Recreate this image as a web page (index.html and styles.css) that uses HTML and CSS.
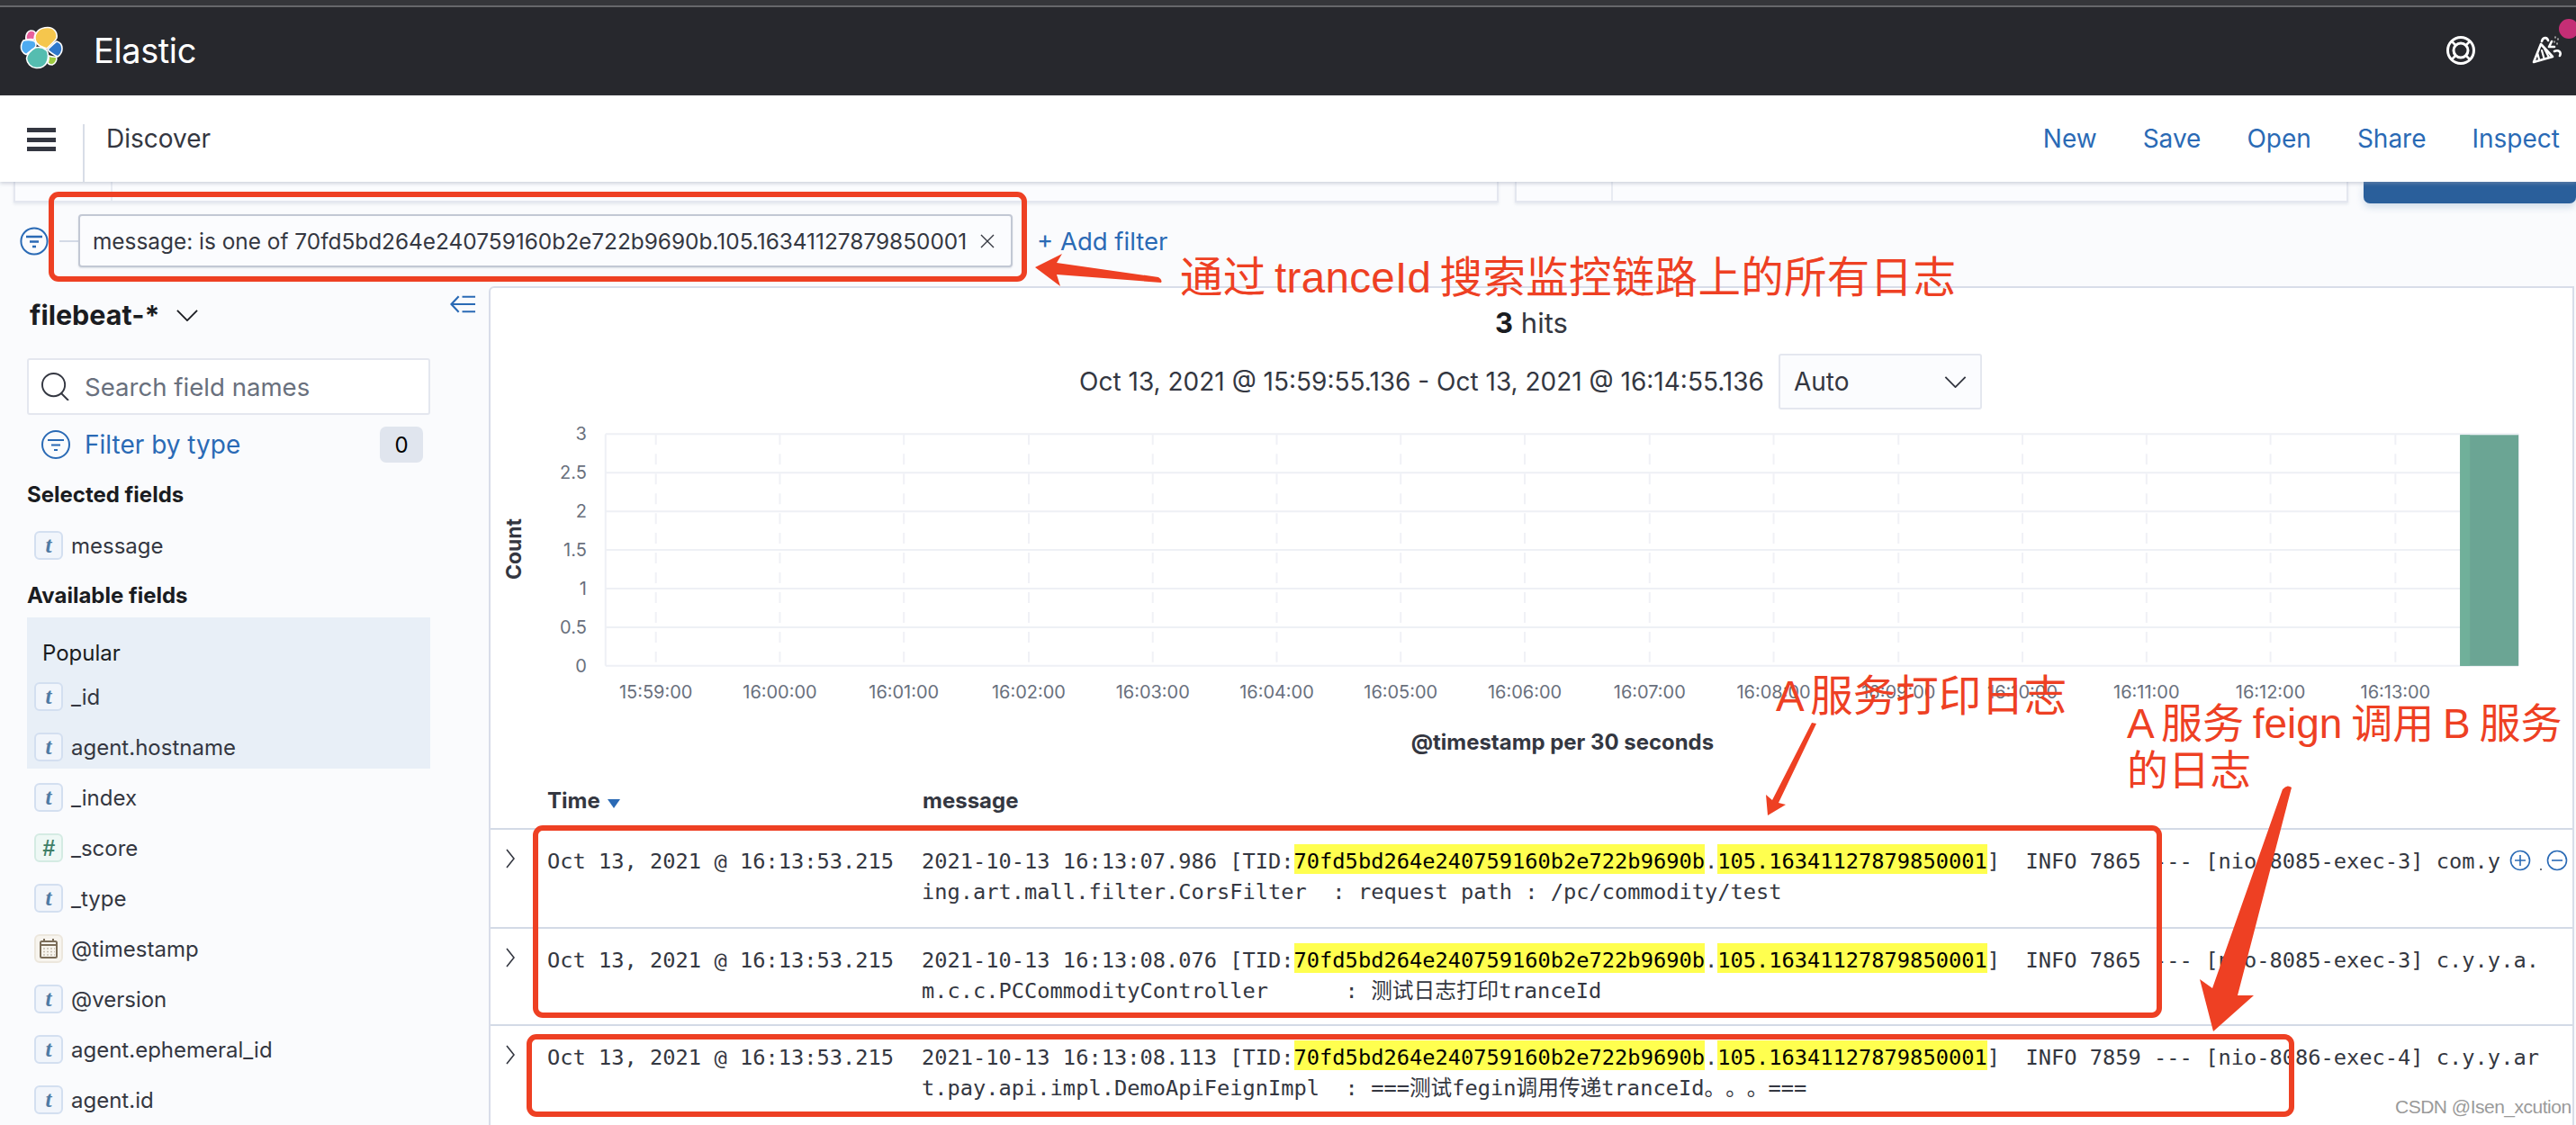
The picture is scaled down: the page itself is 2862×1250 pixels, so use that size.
FILE: index.html
```html
<!DOCTYPE html>
<html lang="en">
<head>
<meta charset="utf-8">
<title>Discover - Elastic</title>
<link rel="stylesheet" href="styles.css">
</head>
<body>
<div class="page">
  <div class="topline"></div>
  <header class="header">
    <div class="brand">
      <svg class="logo" viewBox="0 0 80 65">
        <g stroke="#fff" stroke-width="1.6" stroke-linejoin="round">
          <path fill="#e8609c" d="M19 22C18 15 22 11.5 25 12C27 12 29 13.5 29.5 15C28.5 17 28 20 28 22C25 21 22 21.5 19 22Z"/>
          <path fill="#f5c64d" d="M29 22C28 13 35 8.5 43 8.5C50 8.5 54 14 53 20C52 23 49 25 42 32C36 30 30 28 29 22Z"/>
          <path fill="#4dabf0" d="M16 23C19 22 25 22 29 24C30 27 31 29 28 32C24 34 21 37 19 38.5C15 37 13 33 13.5 29C14 26 15 24 16 23Z"/>
          <path fill="#2f78cc" d="M43 33C47 29 51 25 53 24C57 25 59 28 59 32C59 36 57 39 54 41C50 39 46 37 43 33Z"/>
          <path fill="#55bdb0" d="M29 31C33 30 38 31 42 34C44 38 43.5 43 42.5 46C41 51 36 54 30 53.5C24 53 20 48 19.5 43C20 38 24 34 29 31Z"/>
          <path fill="#9dc93f" d="M44 40C47 41 50 41.5 52.5 41C53.5 44 52 49 48 50C46 50 44 49.5 43 48C44 46 44.5 43 44 40Z"/>
        </g>
      </svg>
      <span class="brand-name">Elastic</span>
    </div>
    <div class="header-icons">
      <svg class="icon-help" viewBox="0 0 34 34" fill="none" stroke="#fff" stroke-width="3">
        <circle cx="17" cy="17" r="14.5"/>
        <circle cx="17" cy="17" r="8"/>
        <path stroke-width="2.5" d="M11 11L7 7M23 11L27 7M11 23L7 27M23 23L27 27"/>
      </svg>
      <svg class="icon-news" viewBox="0 0 34 32" fill="none" stroke="#fff" stroke-width="2.6" stroke-linecap="round" stroke-linejoin="round">
        <path d="M10 9L2 29L23 23Z"/>
        <path d="M8 26L6.5 20M13.5 25L11 16M19 24L14 14" stroke-width="2.2"/>
        <path d="M11 6C12 1 17 1 18 5M22 6L19 12L25 12M25 17C30 15 33 18 31 22"/>
        <path d="M26 1V2M29 3V4M25 6V7M28 8V9" stroke-width="1.6" stroke="#bbb"/>
      </svg>
      <span class="news-dot"></span>
    </div>
  </header>
  <nav class="subnav">
    <div class="menu-btn"><span></span><span></span><span></span></div>
    <div class="crumb">Discover</div>
    <div class="actions">
      <a class="action">New</a>
      <a class="action">Save</a>
      <a class="action">Open</a>
      <a class="action">Share</a>
      <a class="action">Inspect</a>
    </div>
  </nav>
  <div class="querybar">
    <div class="qbox qbox-main"><span class="qcell-prefix"></span></div>
    <div class="qbox qbox-time"><span class="qcell-prefix"></span></div>
    <div class="qbutton"></div>
  </div>
  <div class="filterbar">
    <svg class="icon-filter-main" viewBox="0 0 32 32" fill="none" stroke="#2a6ab5" stroke-width="2">
      <circle cx="16" cy="16" r="14.6"/>
      <path d="M7 11H25M11 16.5H21M14 22H18" stroke-width="2.4"/>
    </svg>
    <span class="filter-dash"></span>
    <div class="chip">
      <span class="chip-text">message: is one of 70fd5bd264e240759160b2e722b9690b.105.16341127879850001</span>
      <svg class="chip-x" viewBox="0 0 16 16" fill="none" stroke="#343741" stroke-width="1.4"><path d="M1 1L15 15M15 1L1 15"/></svg>
    </div>
    <a class="add-filter">+ Add filter</a>
  </div>
  <div class="content">
    <aside class="sidebar">
      <div class="index-row">
        <span class="index-name">filebeat-*</span>
        <svg class="index-caret" viewBox="0 0 26 14" fill="none" stroke="#1a1c21" stroke-width="2"><path d="M1 1L13 13L25 1"/></svg>
        <svg class="collapse" viewBox="0 0 30 20" fill="none" stroke="#2a6ab5" stroke-width="2.2"><path d="M10 1L1.5 10L10 19M2 10H29M14 1.5H29M14 18.5H29"/></svg>
      </div>
      <div class="search">
        <svg class="search-icon" viewBox="0 0 32 32" fill="none" stroke="#343741" stroke-width="2"><circle cx="14" cy="14" r="13"/><path d="M23 24L31 32"/></svg>
        <span class="search-text">Search field names</span>
      </div>
      <div class="type-filter">
        <svg class="type-icon" viewBox="0 0 32 32" fill="none" stroke="#2a6ab5" stroke-width="2"><circle cx="16" cy="16" r="15"/><path d="M7 11H25M11 16.5H21M14 22H18" stroke-width="2.2"/></svg>
        <span class="type-label">Filter by type</span>
        <span class="type-badge">0</span>
      </div>
      <h3 class="group-title selected-title">Selected fields</h3>
      <div class="field"><span class="token token-t">t</span><span class="field-name">message</span></div>
      <h3 class="group-title available-title">Available fields</h3>
      <div class="popular">
        <div class="popular-title">Popular</div>
        <div class="field"><span class="token token-t">t</span><span class="field-name">_id</span></div>
        <div class="field"><span class="token token-t">t</span><span class="field-name">agent.hostname</span></div>
      </div>
      <div class="field"><span class="token token-t">t</span><span class="field-name">_index</span></div>
      <div class="field"><span class="token token-n">#</span><span class="field-name">_score</span></div>
      <div class="field"><span class="token token-t">t</span><span class="field-name">_type</span></div>
      <div class="field"><span class="token token-d"><svg class="cal" viewBox="0 0 20 22" fill="none" stroke="#7a6c58" stroke-width="2"><rect x="1" y="3" width="18" height="18" rx="1.5"/><path d="M1 7H19M5 0V3M15 0V3"/><path stroke="#c5bcae" stroke-width="1.6" stroke-dasharray="2 2" d="M4 11H17M4 14.5H17M4 18H17"/></svg></span><span class="field-name">@timestamp</span></div>
      <div class="field"><span class="token token-t">t</span><span class="field-name">@version</span></div>
      <div class="field"><span class="token token-t">t</span><span class="field-name">agent.ephemeral_id</span></div>
      <div class="field"><span class="token token-t">t</span><span class="field-name">agent.id</span></div>
    </aside>
    <main class="panel">
      <div class="hits"><b>3</b> hits</div>
      <div class="range">
        <span class="range-text">Oct 13, 2021 @ 15:59:55.136 - Oct 13, 2021 @ 16:14:55.136</span>
        <div class="interval">
          <span>Auto</span>
          <svg class="interval-caret" viewBox="0 0 26 14" fill="none" stroke="#343741" stroke-width="2"><path d="M1 1L13 13L25 1"/></svg>
        </div>
      </div>
      <svg class="chart" viewBox="543 465 2317 380">
        <g class="grid-h">
          <path d="M672 482H2801M672 525H2801M672 568H2801M672 611H2801M672 654H2801M672 697H2801M672 740H2801M672 482V740M2801 482V740"/>
        </g>
        <g class="grid-v">
          <path d="M728 482V740M866 482V740M1004 482V740M1143 482V740M1281 482V740M1419 482V740M1557 482V740M1695 482V740M1834 482V740M1972 482V740M2111 482V740M2249 482V740M2387 482V740M2525 482V740M2664 482V740"/>
        </g>
        <rect class="bar" x="2736" y="483" width="65" height="257"/>
        <rect class="bar-edge" x="2736" y="483" width="11" height="257"/>
        <g class="ytick">
          <text x="651" y="489">3</text>
          <text x="651" y="532">2.5</text>
          <text x="651" y="575">2</text>
          <text x="651" y="618">1.5</text>
          <text x="651" y="661">1</text>
          <text x="651" y="704">0.5</text>
          <text x="651" y="747">0</text>
        </g>
        <g class="xtick">
          <text x="728" y="776">15:59:00</text>
          <text x="866" y="776">16:00:00</text>
          <text x="1004" y="776">16:01:00</text>
          <text x="1143" y="776">16:02:00</text>
          <text x="1281" y="776">16:03:00</text>
          <text x="1419" y="776">16:04:00</text>
          <text x="1557" y="776">16:05:00</text>
          <text x="1695" y="776">16:06:00</text>
          <text x="1834" y="776">16:07:00</text>
          <text x="1972" y="776">16:08:00</text>
          <text x="2111" y="776">16:09:00</text>
          <text x="2249" y="776">16:10:00</text>
          <text x="2387" y="776">16:11:00</text>
          <text x="2525" y="776">16:12:00</text>
          <text x="2664" y="776">16:13:00</text>
        </g>
        <text class="axis-title" transform="translate(578 610) rotate(-90)">Count</text>
        <text class="axis-title axis-title-x" x="1737" y="833">@timestamp per 30 seconds</text>
      </svg>
      <div class="table-head">
        <span class="col-time">Time<svg class="sort" viewBox="0 0 14 10"><path fill="#2a6ab5" d="M0 0H14L7 10Z"/></svg></span>
        <span class="col-msg">message</span>
      </div>
      <div class="row row-first">
        <svg class="row-toggle" viewBox="0 0 10 22" fill="none" stroke="#343741" stroke-width="1.6"><path d="M1 1L9 11L1 21"/></svg>
        <span class="cell-time">Oct 13, 2021 @ 16:13:53.215</span>
        <div class="cell-msg">
          <div class="log-line">2021-10-13 16:13:07.986 [TID:<mark>70fd5bd264e240759160b2e722b9690b</mark>.<mark>105.16341127879850001</mark>]  INFO 7865 --- [nio-8085-exec-3] com.yum</div>
          <div class="log-line">ing.art.mall.filter.CorsFilter  : request path : /pc/commodity/test</div>
        </div>
        <div class="row-tools">
          <svg class="tool" viewBox="0 0 24 24" fill="none" stroke="#2a6ab5" stroke-width="1.6"><circle cx="12" cy="12" r="10.5"/><path d="M12 6V18M6 12H18"/></svg>
          <span class="tool-dot"></span>
          <svg class="tool" viewBox="0 0 24 24" fill="none" stroke="#2a6ab5" stroke-width="1.6"><circle cx="12" cy="12" r="10.5"/><path d="M6 12H18"/></svg>
        </div>
      </div>
      <div class="row">
        <svg class="row-toggle" viewBox="0 0 10 22" fill="none" stroke="#343741" stroke-width="1.6"><path d="M1 1L9 11L1 21"/></svg>
        <span class="cell-time">Oct 13, 2021 @ 16:13:53.215</span>
        <div class="cell-msg">
          <div class="log-line">2021-10-13 16:13:08.076 [TID:<mark>70fd5bd264e240759160b2e722b9690b</mark>.<mark>105.16341127879850001</mark>]  INFO 7865 --- [nio-8085-exec-3] c.y.y.a.</div>
          <div class="log-line">m.c.c.PCCommodityController      : 测试日志打印tranceId</div>
        </div>
      </div>
      <div class="row row-last">
        <svg class="row-toggle" viewBox="0 0 10 22" fill="none" stroke="#343741" stroke-width="1.6"><path d="M1 1L9 11L1 21"/></svg>
        <span class="cell-time">Oct 13, 2021 @ 16:13:53.215</span>
        <div class="cell-msg">
          <div class="log-line">2021-10-13 16:13:08.113 [TID:<mark>70fd5bd264e240759160b2e722b9690b</mark>.<mark>105.16341127879850001</mark>]  INFO 7859 --- [nio-8086-exec-4] c.y.y.ar</div>
          <div class="log-line">t.pay.api.impl.DemoApiFeignImpl  : ===测试fegin调用传递tranceId。。。===</div>
        </div>
      </div>
    </main>
  </div>

  <div class="markup">
    <div class="frame frame-filter"></div>
    <div class="frame frame-a"></div>
    <div class="frame frame-b"></div>
    <svg class="arrows" viewBox="0 0 2862 1250">
      <path d="M1150 297L1180 282L1174 292L1287 308Q1292 311 1290 314L1174 305L1178 318Z"/>
      <path d="M2013 803L2018 804L1976 892L1984 894L1964 906L1962 883L1969 889Z"/>
      <path d="M2536 877Q2541 871 2546 875L2486 1106L2504 1106L2459 1146L2444 1088L2458 1098Z"/>
    </svg>
    <div class="note note-search">通过 tranceId 搜索监控链路上的所有日志</div>
    <div class="note note-a">A 服务打印日志</div>
    <div class="note note-b">A 服务 feign 调用 B 服务<br>的日志</div>
    <div class="watermark">CSDN @Isen_xcution</div>
  </div>
</div>
</body>
</html>
```
FILE: styles.css
```css
* { box-sizing: border-box; }
html, body { margin: 0; padding: 0; }
body { background: #fafbfd; font-family: Inter, "Noto Sans CJK SC", sans-serif; color: #343741; }
.page { position: relative; width: 2862px; height: 1250px; overflow: hidden; background: #fafbfd; }

.topline { height: 8px; background: #35363a; border-bottom: 2px solid #66676b; border-top: 5px solid #35363a; }
.header { height: 98px; background: #27282d; display: flex; align-items: center; justify-content: space-between; position: relative; }
.brand { display: flex; align-items: center; }
.logo { width: 80px; height: 65px; margin-left: 10px; margin-top: -6px; display: block; }
.brand-name { color: #fff; font-size: 38px; margin-left: 14px; letter-spacing: -0.4px; margin-top: -2px; }
.header-icons { display: flex; align-items: center; margin-right: 15px; margin-top: -2px; }
.icon-help { width: 34px; height: 34px; display: block; }
.icon-news { width: 34px; height: 32px; margin-left: 62px; display: block; }
.news-dot { position: absolute; left: 2843px; top: 13px; width: 22px; height: 22px; border-radius: 50%; background: #c52e75; }

.subnav { height: 96px; background: #fff; display: flex; align-items: flex-start; position: relative; z-index: 2; box-shadow: 0 2px 4px rgba(152,162,179,.45); }
.menu-btn { width: 94px; height: 64px; margin-top: 32px; padding: 4px 30px 0 30px; border-right: 2px solid #d8dde7; display: flex; flex-direction: column; gap: 5.5px; }
.menu-btn span { display: block; height: 5px; background: #343741; }
.crumb { font-size: 28px; margin-left: 24px; line-height: 34px; margin-top: 31px; }
.actions { margin-left: auto; display: flex; gap: 51px; margin-right: 18px; margin-top: 31px; }
.action { color: #2a6ab5; font-size: 28px; line-height: 34px; }

.querybar { display: flex; height: 24px; padding-left: 15px; }
.qbox { height: 23px; border: 2px solid #e4e7ef; border-top: 0; background: #fbfcfe; box-shadow: 0 2px 3px rgba(152,162,179,.2); }
.qbox-main { width: 1650px; }
.qbox-time { width: 926px; margin-left: 18px; }
.qcell-prefix { display: block; width: 107px; height: 21px; border-right: 2px solid #e8ebf2; }
.qbox-main .qcell-prefix { width: 108px; }
.qbutton { width: 236px; height: 24px; margin-left: 17px; background: #2a5f9b; border-radius: 0 0 7px 7px; box-shadow: 0 4px 8px rgba(42,95,155,.2); }

.filterbar { display: flex; align-items: center; height: 59px; margin-top: 12px; padding-left: 22px; }
.icon-filter-main { width: 32px; height: 32px; display: block; }
.filter-dash { width: 21px; height: 2px; background: #d3dae6; margin-left: 12px; }
.chip { width: 1038px; height: 59px; background: #fbfcfe; border: 2px solid #c2c8d4; border-radius: 4px; display: flex; align-items: center; padding-left: 14px; box-shadow: 0 1px 2px rgba(152,162,179,.3); }
.chip-text { font-size: 24.4px; white-space: nowrap; }
.chip-x { width: 16px; height: 16px; margin-left: 15px; display: block; }
.add-filter { color: #2a6ab5; font-size: 27.5px; margin-left: 27px; }

.content { display: flex; margin-top: 21px; }
.sidebar { width: 543px; padding-left: 30px; position: relative; flex: none; }
.index-row { display: flex; align-items: center; height: 40px; margin-top: 11px; padding-left: 3px; }
.index-name { font-size: 30.5px; font-weight: 700; color: #1a1c21; }
.index-caret { width: 24px; height: 13px; margin-left: 19px; margin-top: 3px; }
.collapse { position: absolute; left: 500px; top: 10px; width: 29px; height: 20px; }
.search { width: 448px; height: 63px; margin-top: 29px; border: 2px solid #e4e7ef; border-radius: 3px; background: #fff; display: flex; align-items: center; padding-left: 14px; }
.search-icon { width: 31px; height: 31px; display: block; }
.search-text { color: #69707d; font-size: 27.6px; margin-left: 17px; }
.type-filter { display: flex; align-items: center; height: 40px; margin-top: 13px; padding-left: 16px; width: 440px; }
.type-icon { width: 32px; height: 32px; display: block; }
.type-label { color: #2a6ab5; font-size: 28px; margin-left: 16px; }
.type-badge { margin-left: auto; width: 48px; height: 40px; border-radius: 7px; background: #e0e5ee; color: #000; font-size: 24px; display: flex; align-items: center; justify-content: center; }
.group-title { margin: 0; font-size: 24px; font-weight: 700; line-height: 30px; color: #1a1c21; }
.selected-title { margin-top: 21px; margin-bottom: 21px; }
.available-title { margin-top: 21px; margin-bottom: 9px; }
.field { display: flex; align-items: center; height: 40px; margin-bottom: 16px; padding-left: 8px; }
.token { width: 32px; height: 32px; border-radius: 6px; border: 2px solid; display: flex; align-items: center; justify-content: center; font-size: 25px; font-family: "Liberation Serif", serif; font-style: italic; font-weight: 700; flex: none; }
.token-t { color: #4f7aa3; background: #f1f5fb; border-color: #d3dff0; }
.token-n { color: #3f7f68; background: #eef8f5; border-color: #d4ebe3; font-family: "Liberation Sans", sans-serif; }
.token-d { background: #f7f4ee; border-color: #ece7dd; }
.cal { width: 20px; height: 22px; display: block; }
.field-name { font-size: 24px; margin-left: 9px; color: #343741; }
.popular { width: 448px; height: 168px; margin-bottom: 12px; padding-top: 25px; background: #e8eff7; }
.popular .field:last-child { margin-bottom: 0; }
.popular-title { font-size: 24px; line-height: 30px; padding-left: 17px; margin-bottom: 13px; color: #1a1c21; }

.panel { width: 2317px; height: 932px; background: #fff; border: 2px solid #d8dde9; border-bottom: 0; border-radius: 6px 0 0 0; overflow: hidden; }
.hits { height: 40px; margin-top: 19px; text-align: center; font-size: 31px; line-height: 40px; }
.hits b { font-weight: 700; color: #1a1c21; }
.range { display: flex; align-items: center; justify-content: center; gap: 16px; height: 62px; margin-top: 14px; padding-right: 2px; }
.range-text { font-size: 28px; }
.interval { width: 226px; height: 62px; background: #fbfcfe; border: 2px solid #e4e7ef; border-radius: 3px; display: flex; align-items: center; justify-content: space-between; padding: 0 15px; font-size: 28px; flex: none; }
.interval-caret { width: 25px; height: 13px; display: block; }
.chart { display: block; width: 2313px; height: 380px; margin-top: 10px; margin-left: -1px; }
.grid-h path { fill: none; stroke: #eef0f5; stroke-width: 2; }
.grid-v path { fill: none; stroke: #f0f1f6; stroke-width: 2; stroke-dasharray: 12 10; }
.bar { fill: #6ba594; }
.bar-edge { fill: #70b09a; }
.ytick text { font-family: Inter, sans-serif; font-size: 20px; fill: #69707d; text-anchor: end; }
.xtick text { font-family: Inter, sans-serif; font-size: 20px; fill: #69707d; text-anchor: middle; }
.axis-title { font-family: Inter, sans-serif; font-size: 23px; font-weight: 700; fill: #343741; text-anchor: middle; }
.axis-title-x { font-size: 24px; }
.table-head { display: flex; height: 77px; align-items: flex-end; padding-left: 63px; padding-bottom: 15px; border-bottom: 2px solid #d3dae6; font-size: 24px; font-weight: 700; line-height: 30px; color: #343741; }
.col-time { width: 417px; display: flex; align-items: center; }
.sort { width: 14px; height: 10px; margin-left: 8px; margin-top: 6px; display: block; }
.row { position: relative; display: flex; padding: 18px 0 20px 0; border-bottom: 2px solid #d3dae6; font-family: "DejaVu Sans Mono", "Noto Sans CJK SC", monospace; font-size: 23.7px; line-height: 34px; }
.row-first { padding-bottom: 22px; }
.row-last { border-bottom: 0; }
.row-toggle { width: 10px; height: 22px; margin-left: 17px; margin-top: 3px; flex: none; display: block; }
.cell-time { margin-left: 36px; width: 416px; flex: none; white-space: pre; }
.log-line { height: 34px; white-space: pre; text-spacing-trim: space-all; }
mark { background: #ffff4f; color: #000; padding: 5px 0 0; }
.row-tools { position: absolute; left: 2235px; top: 16px; width: 80px; height: 36px; background: #fff; display: flex; align-items: center; padding-left: 8px; }
.tool { width: 24px; height: 24px; display: block; }
.tool-dot { width: 2px; height: 2px; background: #69707d; margin: 20px 5px 0 10px; }

.markup { position: absolute; inset: 0; z-index: 5; pointer-events: none; font-family: "Liberation Sans", "Noto Sans CJK SC", sans-serif; }
.frame { position: absolute; border: 6px solid #ee4023; border-radius: 11px; }
.frame-filter { left: 54px; top: 213px; width: 1087px; height: 100px; }
.frame-a { left: 592px; top: 917px; width: 1810px; height: 214px; }
.frame-b { left: 585px; top: 1149px; width: 1964px; height: 92px; }
.arrows { position: absolute; left: 0; top: 0; width: 2862px; height: 1250px; }
.arrows path { fill: #ee4023; }
.note { position: absolute; color: #ee4023; font-size: 47.5px; line-height: 52px; white-space: nowrap; word-spacing: -4px; }
.note-search { left: 1311px; top: 283px; letter-spacing: 0.3px; }
.note-a { left: 1973px; top: 748px; }
.note-b { left: 2363px; top: 778px; font-size: 46px; word-spacing: -3px; }
.watermark { position: absolute; left: 2661px; top: 1218px; font-size: 21px; color: #9a9a9a; white-space: nowrap; letter-spacing: -0.5px; }
```
